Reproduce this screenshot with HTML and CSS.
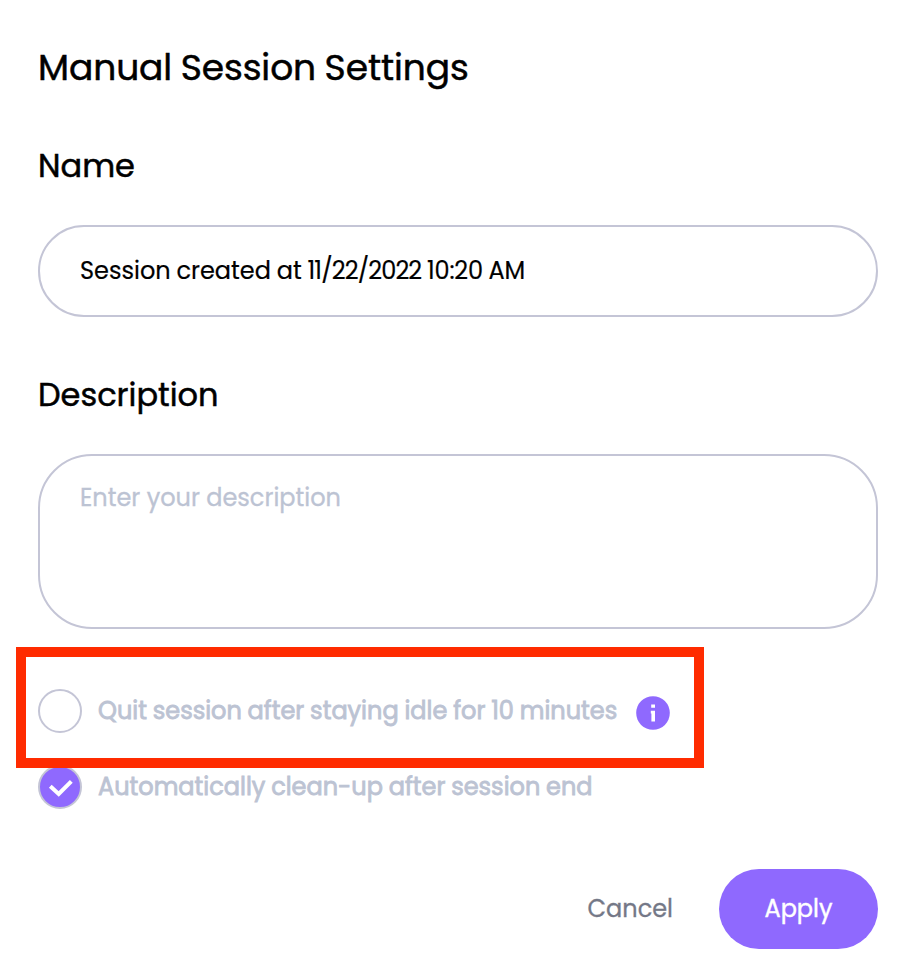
FILE: index.html
```html
<!DOCTYPE html>
<html lang="en">
<head>
<meta charset="utf-8">
<title>Manual Session Settings</title>
<link rel="stylesheet" href="styles.css">
</head>
<body>
<main class="dialog">
  <h1 class="title">Manual Session Settings</h1>
  <h2 class="label">Name</h2>
  <div class="input"><span>Session created at <span class="date">11/22/2022</span> <span class="time">10:20 AM</span></span></div>
  <h2 class="label label-second">Description</h2>
  <div class="textarea">Enter your description</div>
  <div class="options">
    <div class="option">
      <span class="check"></span>
      <span class="option-text quit">Quit session after staying idle for 10 minutes</span>
      <svg class="info" viewBox="0 0 34 34"><circle cx="17" cy="17" r="16.8" fill="#8f69fe"/><path d="M15.200 8.500h3.800v3.200h-3.800zM14.800 14.800H19v10.800h-3.600v-8h-.6z" fill="#fff"/></svg>
      <span class="highlight"></span>
    </div>
    <div class="option">
      <span class="check checked"><svg viewBox="0 0 40 40"><path d="M10.300 19.300 18.700 27 31.300 14.300" fill="none" stroke="#fff" stroke-width="4"/></svg></span>
      <span class="option-text">Automatically clean-up after session end</span>
    </div>
  </div>
  <div class="actions">
    <span class="cancel">Cancel</span>
    <span class="apply">Apply</span>
  </div>
</main>
</body>
</html>
```
FILE: styles.css
```css
* { box-sizing: border-box; }
body {
  margin: 0;
  background: #fff;
  color: #000;
  font-family: Poppins, Inter, "Open Sans", sans-serif;
  font-size: 24px;
  white-space: nowrap;
}
.dialog {
  display: flex;
  flex-direction: column;
  width: 900px;
  height: 976px;
  padding: 44px 22px 27px 38px;
}
.title, .label { margin: 0; font-weight: 400; -webkit-text-stroke: 0.5px; }
.title { font-size: 36px; line-height: 48px; letter-spacing: -0.08px; word-spacing: -1px; }
.label { margin-top: 54px; font-size: 32px; line-height: 40px; }
.label-second { margin-top: 58px; }
.input {
  display: flex;
  align-items: center;
  height: 92px;
  margin-top: 39px;
  padding: 0 40px 2px;
  border: 2px solid #c4c5d6;
  border-radius: 46px;
  word-spacing: -0.6px;
  -webkit-text-stroke: 0.2px;
}
.date { letter-spacing: -0.85px; }
.time { letter-spacing: -0.2px; }
.textarea {
  height: 175px;
  margin-top: 39px;
  padding: 26px 40px;
  border: 2px solid #c4c5d6;
  border-radius: 54px;
  color: #bcc3d3;
  line-height: 32px;
  -webkit-text-stroke: 0.3px;
}
.options { display: flex; flex-direction: column; gap: 32px; margin-top: 60px; }
.option { position: relative; display: flex; align-items: center; height: 44px; }
.check {
  flex: none;
  width: 44px;
  height: 44px;
  border: 2px solid #c4c5d6;
  border-radius: 50%;
}
.checked { background: #8f69fe; }
.checked svg { display: block; width: 40px; height: 40px; }
.option-text {
  margin-left: 16px;
  padding-bottom: 2px;
  color: #bcc3d3;
  word-spacing: -0.6px;
  -webkit-text-stroke: 0.8px;
}
.quit { width: 520px; }
.info { flex: none; width: 34px; height: 34px; margin: 4px 0 0 18px; }
.highlight {
  position: absolute;
  z-index: 1;
  left: -22px;
  top: -42px;
  width: 688px;
  height: 121px;
  border: 10px solid #ff2b00;
}
.actions { display: flex; justify-content: flex-end; align-items: center; gap: 46px; margin-top: 60px; }
.cancel { color: #747887; padding-bottom: 1px; -webkit-text-stroke: 0.3px; }
.apply {
  display: flex;
  align-items: center;
  justify-content: center;
  width: 159px;
  height: 80px;
  padding-bottom: 2px;
  border-radius: 40px;
  background: #8f69fe;
  color: #fff;
  -webkit-text-stroke: 0.4px;
}
```
